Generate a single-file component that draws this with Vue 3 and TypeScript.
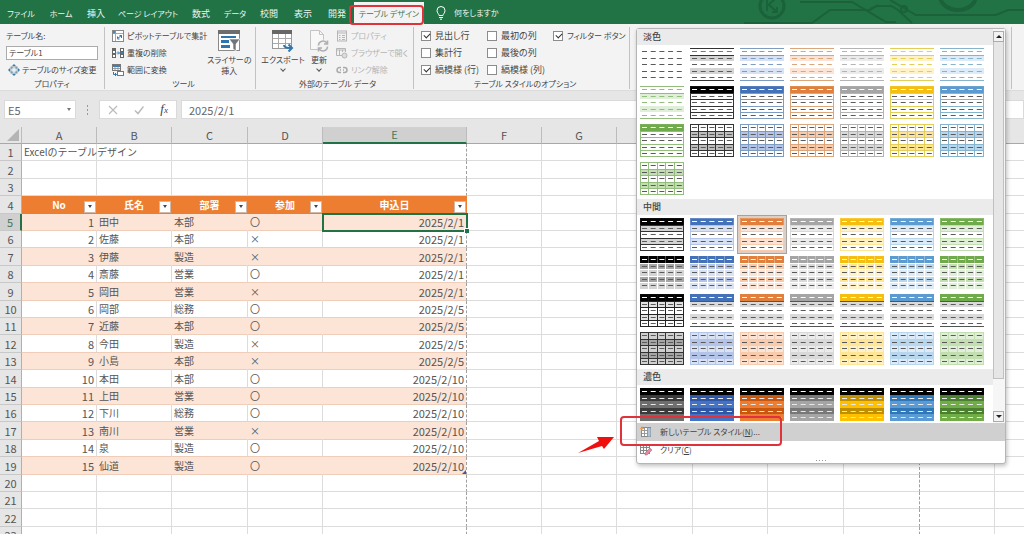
<script setup lang="ts">
import { ref } from 'vue'

type Kind = 'plain' | 'l1' | 'l2' | 'l3' | 'm1' | 'm2' | 'm3' | 'm4' | 'dark'
interface Tone { base: string; deep: string; tint: string; tint2: string; line: string; lit: string }
interface Thumb {
  id: string
  head: string
  headDash: string
  dash: string
  bandA: string
  bandB: string
  hline: string
  vline: string
  frame: string
  rule: string
  selected: boolean
}

const tones: Record<string, Tone> = {
  black: { base: '#000000', deep: '#3b3b3b', tint: '#d4d4d4', tint2: '#a6a6a6', line: '#333333', lit: '#6e6e6e' },
  blue: { base: '#4472b8', deep: '#2f57a5', tint: '#d9e2f3', tint2: '#b4c4e8', line: '#7d9cc0', lit: '#4472c4' },
  orange: { base: '#e0803c', deep: '#c8580f', tint: '#fbe4d6', tint2: '#f8cbad', line: '#dca67c', lit: '#ed7d31' },
  gray: { base: '#a5a5a5', deep: '#787878', tint: '#ebebeb', tint2: '#d9d9d9', line: '#b4b4b4', lit: '#a5a5a5' },
  yellow: { base: '#f6be10', deep: '#c09000', tint: '#fff2c8', tint2: '#ffe596', line: '#e3cf58', lit: '#ffc000' },
  sky: { base: '#5b9bcf', deep: '#2f77b7', tint: '#dcebf7', tint2: '#b9d6ef', line: '#86b4cc', lit: '#5b9bd5' },
  green: { base: '#6faa4b', deep: '#4a8030', tint: '#e0efd8', tint2: '#c3dfb2', line: '#93bd7d', lit: '#70ad47' },
}

function makeThumb(kind: Kind, name: string): Thumb {
  const t = tones[name]
  const black = name === 'black'
  const ink = '#5a5a5a'
  const s: Thumb = {
    id: `${kind}-${name}`, head: 'none', headDash: ink, dash: ink, bandA: '#ffffff', bandB: '#ffffff',
    hline: 'none', vline: 'none', frame: 'none', rule: 'none', selected: kind === 'm1' && name === 'orange',
  }
  switch (kind) {
    case 'l1':
      return { ...s, headDash: black ? '#777777' : t.line, dash: black ? ink : t.line, bandA: t.tint, rule: t.line }
    case 'l2':
      return { ...s, head: t.base, headDash: '#ffffff', hline: t.line, frame: t.line }
    case 'l3':
      return { ...s, bandA: black ? '#bdbdbd' : t.tint2, hline: t.line, vline: t.line, frame: t.line }
    case 'm1':
      return { ...s, head: t.base, headDash: '#ffffff', bandA: t.tint, hline: black ? t.line : t.tint2, frame: black ? t.line : t.tint2 }
    case 'm2':
      return { ...s, head: t.base, headDash: '#ffffff', bandA: t.tint2, bandB: t.tint, hline: '#ffffff', vline: '#ffffff' }
    case 'm3':
      return black
        ? { ...s, head: t.base, headDash: '#ffffff', bandA: '#e2e2e2', hline: '#222222', vline: '#222222', frame: '#222222' }
        : { ...s, head: t.base, headDash: '#ffffff', bandA: '#dadada', rule: '#555555' }
    case 'm4':
      return { ...s, head: black ? '#d0d0d0' : t.tint, bandA: t.tint2, bandB: black ? '#d0d0d0' : t.tint, hline: black ? '#333333' : t.tint2, vline: black ? '#333333' : t.tint2, frame: black ? '#333333' : t.tint2 }
    case 'dark':
      return { ...s, head: '#000000', headDash: '#ffffff', dash: '#e8e8e8', bandA: t.deep, bandB: t.lit }
    default:
      return s
  }
}

const order = ['black', 'blue', 'orange', 'gray', 'yellow', 'sky', 'green']
const run = (kind: Kind): Thumb[] => order.map((n) => makeThumb(kind, n))

const sections = [
  { title: '淡色', thumbs: [makeThumb('plain', 'black'), ...run('l1'), ...run('l2'), ...run('l3')] },
  { title: '中間', thumbs: [...run('m1'), ...run('m2'), ...run('m3'), ...run('m4')] },
  { title: '濃色', thumbs: run('dark') },
]
const bandTops = [7, 13, 20, 26]
const dashTops = [3, 10, 16, 23, 29]
const columnLines = [9, 18, 26, 35]

const tabs = ['ファイル', 'ホーム', '挿入', 'ページ レイアウト', '数式', 'データ', '校閲', '表示', '開発', 'テーブル デザイン']
const activeTab = 'テーブル デザイン'
const isKana = (s: string): boolean => /[ァ-ヶ]/.test(s)

const options = ref([
  { id: 'header-row', label: '見出し行', on: true },
  { id: 'first-col', label: '最初の列', on: false },
  { id: 'filter-button', label: 'フィルター ボタン', on: true },
  { id: 'total-row', label: '集計行', on: false },
  { id: 'last-col', label: '最後の列', on: false },
  { id: 'band-row', label: '縞模様 (行)', on: true },
  { id: 'band-col', label: '縞模様 (列)', on: false },
])

const tableName = ref('テーブル1')
const cellName = ref('E5')
const formula = ref('2025/2/1')

const columns = ['A', 'B', 'C', 'D', 'E', 'F', 'G', 'H', 'I', 'J', 'K', 'L', 'M', 'N']
const headings = ['No', '氏名', '部署', '参加', '申込日']
const people: [string, string, string, string][] = [
  ['田中', '本部', '〇', '2025/2/1'],
  ['佐藤', '本部', '×', '2025/2/1'],
  ['伊藤', '製造', '×', '2025/2/1'],
  ['斎藤', '営業', '〇', '2025/2/1'],
  ['岡田', '営業', '×', '2025/2/1'],
  ['岡部', '総務', '〇', '2025/2/5'],
  ['近藤', '本部', '〇', '2025/2/5'],
  ['今田', '製造', '×', '2025/2/5'],
  ['小島', '本部', '×', '2025/2/5'],
  ['本田', '本部', '〇', '2025/2/10'],
  ['上田', '営業', '〇', '2025/2/10'],
  ['下川', '総務', '〇', '2025/2/10'],
  ['南川', '営業', '×', '2025/2/10'],
  ['泉', '製造', '〇', '2025/2/10'],
  ['仙道', '製造', '〇', '2025/2/10'],
]
const rowCount = 23

function cellText(row: number, col: number): string {
  if (row === 1 && col === 0) return 'Excelのテーブルデザイン'
  const i = row - 5
  if (i < 0 || i >= people.length || col > 4) return ''
  return col === 0 ? String(i + 1) : people[i][col - 1]
}
function cellClass(row: number, col: number) {
  const inTable = row >= 5 && row <= 19 && col <= 4
  return {
    data: inTable,
    band: inTable && row % 2 === 1,
    num: inTable && (col === 0 || col === 4),
    title: row === 1 && col === 0,
    'page-edge': col === 4 || col === 10,
    active: row === 5 && col === 4,
    corner: row === 19 && col === 4,
  }
}
</script>

<template>
  <div class="app">
    <header class="titlebar">
      <svg class="circuit" viewBox="0 0 290 24" width="290" height="24" fill="none" stroke="#1b6139" stroke-width="2" aria-hidden="true">
        <circle cx="38" cy="6" r="12" stroke-width="3" />
        <path d="M33 0v11M33 6l8-7M34 4l9 8M38 12h5v-5" />
        <path d="M10 23h68l18-13h40l8-5M66 2h52l34 20h10M136 9l7-3h14l7 4 14 13" />
        <circle cx="170" cy="9" r="3" />
        <path d="M156 0l26 15h80l12-5h20" />
        <path d="M206-4a18 14 0 0 0 36 0" stroke-width="4" />
      </svg>
      <nav class="tabs">
        <button v-for="t in tabs" :key="t" type="button" class="tab" :class="{ on: t === activeTab, kana: isKana(t) }">{{ t }}<span v-if="t === activeTab" class="mark tab-mark"></span></button>
      </nav>
      <button type="button" class="tell kana">
        <svg viewBox="0 0 10 14" width="10" height="14" fill="none" stroke="#fff" stroke-width="1"><path d="M3 9.500C3 8 1 7 1 4.500a4 4 0 0 1 8 0C9 7 7 8 7 9.500zM3 11.500h4M4 13.200h2" /></svg>
        何をしますか
      </button>
    </header>

    <section class="ribbon">
      <div class="group g-prop">
        <div class="stack">
          <label class="line" for="table-name">テーブル名:</label>
          <input id="table-name" v-model="tableName" class="name-input" type="text" />
          <button type="button" class="cmd inset">
            <svg viewBox="0 0 12 12" width="12" height="12"><rect x="3" y="3" width="6" height="6" fill="#b8cbd8" stroke="#6f8ea3" /><path d="M6 0l2 2H4zM6 12l2-2H4zM0 6l2-2v4zM12 6l-2-2v4z" fill="#3a7ca8" /><path d="M3 6h6M6 3v6" stroke="#fff" /></svg>
            テーブルのサイズ変更
          </button>
        </div>
        <div class="caption">プロパティ</div>
      </div>

      <div class="group g-tool">
        <div class="body">
          <div class="stack">
            <button type="button" class="cmd">
              <svg viewBox="0 0 12 12" width="12" height="12" fill="none"><rect x=".5" y=".5" width="11" height="11" fill="#fff" stroke="#888" /><path d="M1 3.500h10M3.500 1v10" stroke="#aaa" /><path d="M1 1h2.500v2.500H1z" fill="#4a87b4" /><path d="M5.500 8.500l4-3M9.500 5.500v2.500M9.500 5.500H7.500M5.500 8.500V6.500M5.500 9h2" stroke="#2f75ad" /></svg>
              ピボットテーブルで集計
            </button>
            <button type="button" class="cmd">
              <svg viewBox="0 0 12 12" width="12" height="12"><path d="M0 1h4v10H0zM8 1h4v10H8z" fill="#666" /><path d="M1 4h2v2H1zM1 8h2v2H1zM9 2h2v2H9zM9 8h2v2H9z" fill="#fff" /><path d="M9 5h2v2H9z" fill="#3b82b8" /><path d="M4.500 6h3M6 4.500L7.500 6 6 7.500" stroke="#3b82b8" fill="none" /></svg>
              重複の削除
            </button>
            <button type="button" class="cmd">
              <svg viewBox="0 0 12 12" width="12" height="12" fill="none"><rect x=".5" y=".5" width="8" height="6" fill="#fff" stroke="#777" /><path d="M1 1h7v2H1z" fill="#3b82b8" /><path d="M3 3v3M6 3v3M1 4.500h7" stroke="#999" /><rect x="5.500" y="7.500" width="6" height="4" fill="#fff" stroke="#777" /><path d="M1.500 8v2.500h3M3 9l1.500 1.500L3 12" stroke="#2f75ad" /></svg>
              範囲に変換
            </button>
          </div>
          <button type="button" class="big slicer">
            <svg viewBox="0 0 22 22" width="22" height="22"><rect x=".5" y=".5" width="21" height="20" fill="#fff" stroke="#8a8a8a" /><path d="M0 0h22v4H0z" fill="#6d6d6d" /><path d="M3 6h15v2H3zM3 10h8v3H3zM3 15h9v3H3z" fill="#2f75ad" /><path d="M11 9h11l-4 5v7l-3-2v-5z" fill="#70757a" stroke="#fff" stroke-width=".6" /></svg>
            <span>スライサーの</span><span>挿入</span>
          </button>
        </div>
        <div class="caption">ツール</div>
      </div>

      <div class="group g-ext">
        <div class="body">
          <button type="button" class="big export">
            <svg viewBox="0 0 22 22" width="22" height="22" fill="none"><rect x=".5" y=".5" width="19" height="18" fill="#fff" stroke="#999" /><path d="M0 0h20v4H0z" fill="#666" /><path d="M1 8.500h18M1 13.500h18M6.500 4v14M13.500 4v14" stroke="#aaa" /><path d="M12 15c0 3 3 3 7 3M16.500 14.500L20 18l-3.500 3.500" stroke="#2f75ad" stroke-width="2" /></svg>
            <span>エクスポート</span><i class="chev"></i>
          </button>
          <button type="button" class="big refresh">
            <svg viewBox="0 0 22 22" width="22" height="22" fill="none"><path d="M2.500.5h9l4 4v15h-13z" fill="#f8f8f8" stroke="#c4c4c4" /><path d="M11.500.5v4h4" stroke="#c4c4c4" /><circle cx="15" cy="16" r="6.500" fill="#f3f3f3" /><path d="M10.500 15.500a4.500 4.500 0 0 1 8.500-2M19.500 10.500v3.500H16M19.500 16.500a4.500 4.500 0 0 1-8.500 2M10.500 21.500V18H14" stroke="#b0b0b0" stroke-width="1.600" /></svg>
            <span>更新</span><i class="chev"></i>
          </button>
          <div class="stack off">
            <button type="button" class="cmd" disabled>
              <svg viewBox="0 0 12 12" width="12" height="12" fill="none" stroke="#b5b5b5"><rect x="1.500" y="1" width="9" height="10" /><path d="M1.500 3h9M3 5.500h1.500M6 5.500h3M3 7.500h1.500M6 7.500h3M3 9.500h1.500M6 9.500h3" /></svg>
              プロパティ
            </button>
            <button type="button" class="cmd" disabled>
              <svg viewBox="0 0 12 12" width="12" height="12" fill="none" stroke="#b5b5b5"><path d="M6 8.500H.5v-7h9V5M.5 3h9M3.500 3v5M6.500 3v2" /><circle cx="8.500" cy="8.500" r="2.500" fill="#ddd" /></svg>
              ブラウザーで開く
            </button>
            <button type="button" class="cmd" disabled>
              <svg viewBox="0 0 12 12" width="12" height="12" fill="none" stroke="#aaa" stroke-width="1.500"><path d="M5 3.500H3.500a2.500 2.500 0 0 0 0 5H5M7 3.500h1.500a2.500 2.500 0 0 1 0 5H7M4 6h1M7 6h1" /></svg>
              リンク解除
            </button>
          </div>
        </div>
        <div class="caption">外部のテーブル データ</div>
      </div>

      <div class="group g-opt">
        <div class="checks">
          <label v-for="o in options" :key="o.id" class="check" :class="[o.id, { kana: isKana(o.label) }]" :for="o.id">
            <input :id="o.id" v-model="o.on" type="checkbox" />{{ o.label }}
          </label>
        </div>
        <div class="caption">テーブル スタイルのオプション</div>
      </div>

      <div class="group g-style">
        <div class="popup">
          <div class="gallery">
            <div class="gallery-list">
              <section v-for="s in sections" :key="s.title">
                <h2>{{ s.title }}</h2>
                <div class="thumbs">
                  <button v-for="t in s.thumbs" :key="t.id" type="button" class="thumb" :class="{ sel: t.selected }" :aria-label="t.id">
                    <svg viewBox="0 0 44 33" width="44" height="33" fill="none">
                      <rect width="44" height="33" fill="#fff" />
                      <rect v-for="(y, i) in bandTops" :key="y" :y="y" width="44" :height="i % 2 ? 7 : 6" :fill="i % 2 ? t.bandB : t.bandA" />
                      <rect width="44" height="7" :fill="t.head" />
                      <path v-for="y in bandTops" :key="'h' + y" :d="`M0 ${y + 0.5}h44`" :stroke="t.hline" />
                      <path v-for="x in columnLines" :key="'v' + x" :d="`M${x - 0.5} 0v33`" :stroke="t.vline" />
                      <path d="M0 7.500h44M0 32.500h44" :stroke="t.rule" />
                      <path v-if="t.head === 'none'" d="M0 .5h44" :stroke="t.rule" />
                      <rect x=".5" y=".5" width="43" height="32" :stroke="t.frame" />
                      <rect v-if="t.headDash === '#ffffff'" width="44" height="7" :fill="t.head" fill-opacity=".7" />
                      <path v-for="(y, i) in dashTops" :key="'d' + y" :d="`M2 ${y + 0.5}h42`" :stroke="i ? t.dash : t.headDash" stroke-dasharray="5 3.700" />
                    </svg>
                  </button>
                </div>
              </section>
            </div>
            <div class="scroll">
              <button type="button" class="arrow up" aria-label="上へ"></button>
              <div class="grip"></div>
              <div class="track"></div>
              <button type="button" class="arrow down" aria-label="下へ"></button>
            </div>
          </div>
          <button type="button" class="menu hot">
            <svg viewBox="0 0 12 12" width="12" height="12" fill="none"><rect x="1.500" y="1.500" width="9" height="9" fill="#fff" stroke="#888" /><path d="M1.500 4.500h9M1.500 7.500h9M4.500 1.500v9M7.500 1.500v9" stroke="#999" /><path d="M8 2h2.500v8.500H8z" fill="#a9c4dc" /><path d="M0 2.500h4M2 .5v4" stroke="#e8a25b" /></svg>
            <span>新しいテーブル スタイル(<u>N</u>)...</span>
            <span class="mark menu-mark"></span>
            <svg class="pointer" viewBox="0 0 36 18" width="36" height="18" aria-hidden="true"><path d="M0 17L21 5 19 1 36 1 26 13 24 10z" fill="#f00f0f" /></svg>
          </button>
          <button type="button" class="menu">
            <svg viewBox="0 0 12 12" width="12" height="12" fill="none"><rect x=".5" y=".5" width="9" height="9" fill="#fff" stroke="#888" /><path d="M.5 3.500h9M.5 6.500h9M3.500.5v9M6.500.5v9" stroke="#888" /><path d="M5 9l5-5 2 2-5 5H5z" fill="#e28aa0" stroke="#b86b80" stroke-width=".6" /></svg>
            <span>クリア(<u>C</u>)</span>
          </button>
          <div class="dots"><i></i><i></i><i></i><i></i></div>
        </div>
      </div>
    </section>

    <section class="formula-bar">
      <div class="namebox">
        <input v-model="cellName" type="text" aria-label="名前ボックス" />
        <button type="button" class="drop" aria-label="名前の一覧"></button>
      </div>
      <div class="handle"><i></i><i></i><i></i></div>
      <div class="fx">
        <button type="button" aria-label="キャンセル"><svg viewBox="0 0 10 10" width="10" height="10" fill="none" stroke="#bbb" stroke-width="1.200"><path d="M1 1l8 8M9 1L1 9" /></svg></button>
        <button type="button" aria-label="入力"><svg viewBox="0 0 10 10" width="10" height="10" fill="none" stroke="#bbb" stroke-width="1.500"><path d="M1 5.500L4 8.500 9.500 1.500" /></svg></button>
        <button type="button" class="fn">f<small>x</small></button>
      </div>
      <input v-model="formula" class="formula" type="text" aria-label="数式バー" />
    </section>

    <main class="sheet">
      <table>
        <colgroup>
          <col class="c-head" />
          <col v-for="c in columns" :key="c" :class="'c-' + c" />
        </colgroup>
        <thead>
          <tr>
            <th class="all"><i></i></th>
            <th v-for="c in columns" :key="c" scope="col" :class="{ cur: c === 'E' }">{{ c }}</th>
          </tr>
        </thead>
        <tbody>
          <tr v-for="r in rowCount" :key="r">
            <th scope="row" :class="{ cur: r === 5 }">{{ r }}</th>
            <template v-for="(c, ci) in columns" :key="c">
              <td v-if="r === 4 && ci < 5" class="heading">
                <div><span class="txt">{{ headings[ci] }}</span><button type="button" class="filter" :aria-label="headings[ci] + 'のフィルター'"></button></div>
              </td>
              <td v-else :class="cellClass(r, ci)">{{ cellText(r, ci) }}</td>
            </template>
          </tr>
        </tbody>
      </table>
    </main>
  </div>
</template>

<style>
body { margin: 0; overflow: hidden; }
</style>

<style scoped>
.app {
  height: 100vh;
  display: flex;
  flex-direction: column;
  overflow: hidden;
  background: #e6e6e6;
  color: #444;
  font-family: "Noto Sans CJK JP", "Noto Sans", sans-serif;
  font-size: 9px;
  line-height: 12px;
}
.app * { box-sizing: border-box; }
button, input { font: inherit; color: inherit; margin: 0; padding: 0; border: 0; background: none; border-radius: 0; outline: 0; }
button { white-space: nowrap; }
svg { display: block; flex: none; }
.titlebar, .ribbon { font-feature-settings: "palt"; }
.kana, .cmd, .caption, .line, .name-input, .big, .menu { font-size: 8px; }

.titlebar { position: relative; display: flex; height: 24px; flex: none; background: #217346; color: #eef5f0; }
.circuit { position: absolute; right: 0; top: 0; }
.tabs { display: grid; grid-template-columns: 42px 38px 32px 72px 34px 34px 34px 34px 34px 70px; }
.tab { position: relative; padding-top: 3px; text-align: center; }
.tab.on { margin-top: 2px; padding-top: 1px; background: #f3f3f3; color: #3b7557; }
.mark { position: absolute; border: 2px solid #e0323a; border-radius: 4px; pointer-events: none; }
.tab-mark { left: -5px; top: 3px; width: 75px; height: 20px; z-index: 3; }
.tell { display: flex; align-items: center; gap: 8px; margin-left: 12px; padding-top: 2px; }

.ribbon { display: flex; flex: none; height: 67px; padding-top: 3px; background: #f3f3f3; border-bottom: 1px solid #dcdcdc; }
.group { display: flex; flex-direction: column; justify-content: space-between; flex: none; height: 62px; border-right: 1px solid #c2c2c2; }
.caption { text-align: center; line-height: 12px; margin-bottom: -1px; }
.body { display: flex; }
.stack { display: grid; grid-template-rows: repeat(3, 17px); align-items: center; }
.cmd { display: flex; align-items: center; gap: 3px; }
.off { color: #b3b3b3; }
.g-prop { width: 105px; padding: 0 6px; }
.inset { padding-left: 2px; gap: 2px; }
.name-input { width: 100%; height: 14px; padding: 0 2px; background: #fff; border: 1px solid #ababab; }
.g-tool { width: 151px; padding-left: 7px; }
.g-ext { width: 158px; padding-left: 6px; }
.g-opt { width: 216px; padding-left: 7px; }
.big { display: flex; flex: none; flex-direction: column; align-items: center; line-height: 11px; padding-top: 3px; }
.big svg { margin-bottom: 2px; }
.slicer { margin-left: auto; padding-right: 4px; }
.export { width: 42px; }
.refresh { width: 30px; }
.chev { width: 4px; height: 4px; margin-top: 2px; border-right: 1px solid #555; border-bottom: 1px solid #555; transform: rotate(45deg); }
.g-ext .stack { margin-left: 2px; }
.checks { display: grid; grid-template-columns: 66px 66px 1fr; grid-template-rows: repeat(3, 17px); align-items: center; }
.check { display: flex; align-items: center; gap: 4px; white-space: nowrap; }
.total-row, .band-row { grid-column: 1; }
.check input { appearance: none; position: relative; width: 10px; height: 10px; background: #fff; border: 1px solid #8c8c8c; }
.check input:checked::after { content: ""; position: absolute; left: 2px; top: 1px; width: 5px; height: 3px; border-left: 1px solid #333; border-bottom: 1px solid #333; transform: rotate(-45deg); }
.g-style { position: relative; flex: 1; margin-right: 12px; }

.popup { position: absolute; left: 6px; top: 1px; width: 370px; z-index: 5; background: #fff; border: 1px solid #b5b5b5; border-radius: 3px; box-shadow: 1px 2px 4px rgba(0, 0, 0, 0.25); }
.gallery { display: flex; height: 394px; }
.gallery-list { flex: 1; overflow: hidden; }
h2 { margin: 0; padding-left: 6px; height: 16px; font-size: 9px; line-height: 16px; font-weight: 500; background: #ebebeb; }
.thumbs { display: grid; grid-template-columns: repeat(7, 44px); gap: 5px 6px; padding: 3px 3px 4px; }
.thumb { width: 44px; height: 33px; }
.thumb.sel { box-shadow: 0 0 0 2px #dccfc8, 0 0 0 3px #a8a29e; }
.scroll { display: flex; flex-direction: column; width: 12px; padding: 2px 1px 1px 0; background: #f6f6f6; }
.arrow { display: grid; place-items: center; height: 11px; background: #f3f3f3; border: 1px solid #ababab; }
.arrow::before { content: ""; border: 3px solid transparent; }
.up::before { border-top: 0; border-bottom-color: #222; }
.down::before { border-bottom: 0; border-top-color: #222; }
.grip { flex: 1; background: #e6e6e6; border: 1px solid #c0c0c0; border-top: 0; }
.track { height: 32px; }
.menu { position: relative; display: flex; align-items: center; gap: 8px; width: 100%; height: 18px; padding-left: 3px; }
.menu.hot { background: #d0d0d0; }
.menu-mark { left: -17px; top: -7px; width: 162px; height: 30px; z-index: 2; }
.pointer { position: absolute; left: -59px; top: 13px; }
.dots { display: flex; justify-content: center; gap: 2px; height: 4px; padding-top: 1px; }
.dots i { width: 1px; height: 1px; background: #999; }

.formula-bar { display: flex; flex: none; height: 36px; padding: 9px 0 8px 4px; font-size: 11px; color: #666; }
.namebox { display: flex; width: 72px; background: #fff; border: 1px solid #dadada; }
.namebox input { flex: 1; min-width: 0; padding-left: 3px; }
.drop { width: 12px; display: grid; place-items: center; }
.drop::before { content: ""; border: 2px solid transparent; border-bottom: 0; border-top: 3px solid #777; }
.handle { display: flex; flex-direction: column; justify-content: center; align-items: center; gap: 2px; width: 23px; }
.handle i { width: 1px; height: 2px; background: #999; }
.fx { display: flex; justify-content: space-around; align-items: center; width: 78px; margin-right: 4px; background: #fff; border: 1px solid #dadada; }
.fn { font-family: "Liberation Serif", serif; font-style: italic; font-size: 13px; color: #444; }
.fn small { font-size: 9px; }
.formula { flex: 1; min-width: 0; padding-left: 7px; background: #fff; border: 1px solid #dadada; }

.sheet { flex: 1; min-height: 0; overflow: hidden; background: #fff; }
table { width: 100%; min-width: 1146px; table-layout: fixed; border-collapse: separate; border-spacing: 0; font-size: 10px; line-height: 16px; color: #555; }
col { width: 75px; }
.c-head { width: 22px; }
.c-C, .c-H, .c-J, .c-K, .c-M { width: 76px; }
.c-E { width: 144px; }
.c-N { width: auto; }
th, td { padding: 0; height: 17px; white-space: nowrap; }
tbody tr:nth-child(5n + 2), tbody tr:nth-child(5n + 4) { height: 18px; }
thead th { background: #e6e6e6; border-right: 1px solid #bcbcbc; border-bottom: 1px solid #a8a8a8; font-size: 11px; font-weight: 400; }
thead th.cur { background: #d0d0d0; color: #3f7a58; border-bottom: 2px solid #217346; line-height: 15px; }
.all i { display: block; width: 12px; height: 12px; margin-left: 7px; background: #b4b4b4; clip-path: polygon(100% 0, 100% 100%, 0 100%); }
tbody th { background: #e6e6e6; border-right: 1px solid #b0b0b0; border-bottom: 1px solid #c8c8c8; font-size: 11px; font-weight: 400; text-align: center; }
tbody th.cur { background: #d0d0d0; color: #3f7a58; border-right: 2px solid #217346; }
td { border-right: 1px solid #dcdcdc; border-bottom: 1px solid #dcdcdc; }
td.title { overflow: visible; padding-left: 2px; }
td.data { padding: 0 2px; border-bottom-color: #f0cdb8; }
td.band { background: #fce4d6; border-right-color: #fce4d6; }
td.num { text-align: right; font-size: 11px; }
td.page-edge { border-right: 1px dashed #a0a0a0; background-clip: padding-box; }
td.heading { background: #ed7d31; border-color: #ed7d31; color: #fff; font-weight: 700; }
.heading div { display: grid; grid-template-columns: 1fr auto 1fr; align-items: end; }
.heading .txt { grid-column: 2; }
.filter { justify-self: end; display: grid; place-items: center; width: 12px; height: 12px; background: #fff; border: 1px solid #d0b8a8; }
.filter::before { content: ""; border: 2px solid transparent; border-bottom: 0; border-top: 3px solid #445; }
td.active { position: relative; outline: 2px solid #217346; outline-offset: -1px; }
td.active::after { content: ""; position: absolute; right: -3px; bottom: -3px; width: 4px; height: 4px; background: #217346; border: 1px solid #fff; border-width: 1px 0 0 1px; }
td.corner { position: relative; }
td.corner::after { content: ""; position: absolute; right: 0; bottom: 0; width: 4px; height: 4px; background: #4a55a0; clip-path: polygon(100% 0, 100% 100%, 0 100%); }
</style>
